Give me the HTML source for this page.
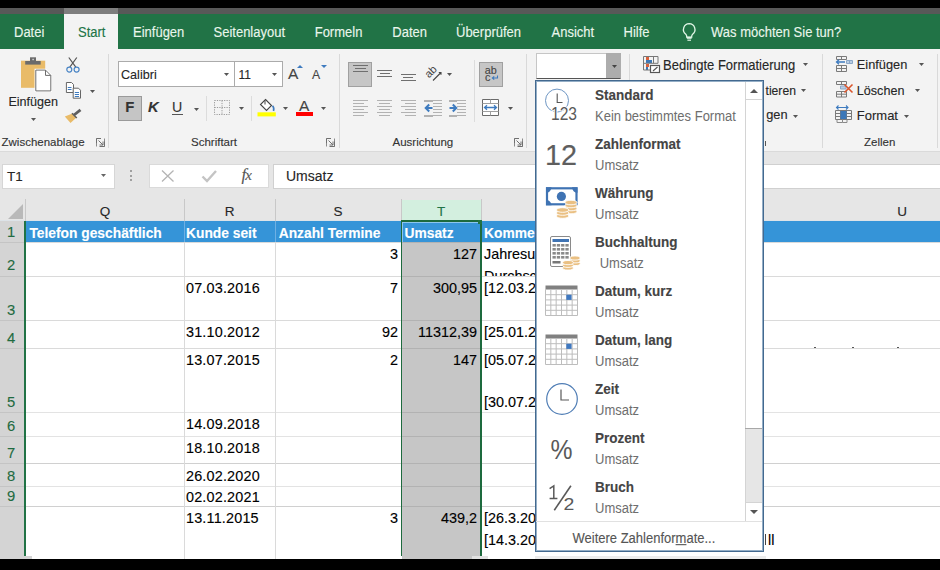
<!DOCTYPE html>
<html><head><meta charset="utf-8"><style>
html,body{margin:0;padding:0;}
body{width:940px;height:570px;position:relative;overflow:hidden;background:#fff;font-family:"Liberation Sans",sans-serif;}
div,span,svg{position:absolute;}
.t{white-space:nowrap;-webkit-text-stroke:0.12px currentColor;}
</style></head><body>
<div style="left:0px;top:0px;width:940px;height:8px;background:#000;"></div>
<div style="left:0px;top:8px;width:940px;height:6px;background:#585858;"></div>
<div style="left:64px;top:8px;width:54px;height:6px;background:#7e7e7e;"></div>
<div style="left:0px;top:14px;width:940px;height:35px;background:#217346;"></div>
<div style="left:64px;top:14px;width:54px;height:35px;background:#f3f3f3;"></div>
<span class="t" style="top:26.00px;font-size:13px;line-height:13px;color:#eaf6ec;font-weight:normal;transform:scaleY(1.12);transform-origin:0 11.00px;left:14px;">Datei</span>
<span class="t" style="top:26.00px;font-size:13px;line-height:13px;color:#eaf6ec;font-weight:normal;transform:scaleY(1.12);transform-origin:0 11.00px;left:133px;">Einfügen</span>
<span class="t" style="top:26.00px;font-size:13px;line-height:13px;color:#eaf6ec;font-weight:normal;transform:scaleY(1.12);transform-origin:0 11.00px;left:213.5px;">Seitenlayout</span>
<span class="t" style="top:26.00px;font-size:13px;line-height:13px;color:#eaf6ec;font-weight:normal;transform:scaleY(1.12);transform-origin:0 11.00px;left:314.7px;">Formeln</span>
<span class="t" style="top:26.00px;font-size:13px;line-height:13px;color:#eaf6ec;font-weight:normal;transform:scaleY(1.12);transform-origin:0 11.00px;left:392.3px;">Daten</span>
<span class="t" style="top:26.00px;font-size:13px;line-height:13px;color:#eaf6ec;font-weight:normal;transform:scaleY(1.12);transform-origin:0 11.00px;left:456px;">Überprüfen</span>
<span class="t" style="top:26.00px;font-size:13px;line-height:13px;color:#eaf6ec;font-weight:normal;transform:scaleY(1.12);transform-origin:0 11.00px;left:551.5px;">Ansicht</span>
<span class="t" style="top:26.00px;font-size:13px;line-height:13px;color:#eaf6ec;font-weight:normal;transform:scaleY(1.12);transform-origin:0 11.00px;left:623.5px;">Hilfe</span>
<span class="t" style="top:26.00px;font-size:13px;line-height:13px;color:#eaf6ec;font-weight:normal;transform:scaleY(1.12);transform-origin:0 11.00px;left:711px;">Was möchten Sie tun?</span>
<span class="t" style="top:26.00px;font-size:13px;line-height:13px;color:#217346;font-weight:normal;transform:scaleY(1.12);transform-origin:0 11.00px;left:78px;">Start</span>
<svg style="left:680px;top:20px;" width="20" height="22" viewBox="0 0 20 22"><path d="M9.2 3.6a5.9 5.9 0 0 0-3.4 10.6c.8.7.9 1.3.9 2.1v.9h5v-.9c0-.8.1-1.4.9-2.1A5.9 5.9 0 0 0 9.2 3.6z" fill="none" stroke="#e0f6e6" stroke-width="1.3"/><path d="M6.8 17.8h4.8" stroke="#e0f6e6" stroke-width="2"/><path d="M7.4 20.2h3.6" stroke="#e0f6e6" stroke-width="1.2"/></svg>
<div style="left:0px;top:49px;width:940px;height:103px;background:#f3f3f3;"></div>
<div style="left:0px;top:151px;width:940px;height:1px;background:#dadada;"></div>
<div style="left:108px;top:54px;width:1px;height:94px;background:#d9d9d9;"></div>
<div style="left:339px;top:54px;width:1px;height:94px;background:#d9d9d9;"></div>
<div style="left:526px;top:54px;width:1px;height:94px;background:#d9d9d9;"></div>
<div style="left:629px;top:54px;width:1px;height:94px;background:#d9d9d9;"></div>
<div style="left:822px;top:54px;width:1px;height:94px;background:#d9d9d9;"></div>
<div style="left:937px;top:54px;width:1px;height:94px;background:#d9d9d9;"></div>
<span class="t" style="top:137.47px;font-size:11.5px;line-height:11.5px;color:#333333;font-weight:normal;left:1.5px;">Zwischenablage</span>
<span class="t" style="top:137.47px;font-size:11.5px;line-height:11.5px;color:#333333;font-weight:normal;left:191px;">Schriftart</span>
<span class="t" style="top:137.47px;font-size:11.5px;line-height:11.5px;color:#333333;font-weight:normal;left:392.5px;">Ausrichtung</span>
<span class="t" style="top:137.47px;font-size:11.5px;line-height:11.5px;color:#333333;font-weight:normal;left:864px;">Zellen</span>
<div style="left:0px;top:152px;width:940px;height:47px;background:#e6e6e6;"></div>
<div style="left:2px;top:163.5px;width:112.5px;height:25.0px;background:#ffffff;border:1px solid #d6d6d6;box-sizing:border-box"></div>
<div style="left:149px;top:164px;width:120px;height:24px;background:#ffffff;"></div>
<div style="left:273px;top:163.5px;width:669px;height:25.0px;background:#ffffff;border:1px solid #d0d0d0;box-sizing:border-box"></div>
<span class="t" style="top:169.57px;font-size:13.5px;line-height:13.5px;color:#262626;font-weight:normal;left:7px;">T1</span>
<div style="left:149px;top:164px;width:120px;height:24px;background:#ffffff;border:1px solid #dadada;box-sizing:border-box"></div>
<svg style="left:101px;top:174.2px;" width="5" height="3" viewBox="0 0 5 3"><path d="M0 0H5L2.5 3Z" fill="#666"/></svg>
<div style="left:129.5px;top:169.5px;width:2.0px;height:2.0px;background:#a0a0a0;"></div>
<div style="left:129.5px;top:174.5px;width:2.0px;height:2.0px;background:#a0a0a0;"></div>
<div style="left:129.5px;top:179.3px;width:2.0px;height:2.0px;background:#a0a0a0;"></div>
<svg style="left:160px;top:168px;" width="17" height="16" viewBox="0 0 17 16"><path d="M2 2.5L13.5 13.5M13.5 2.5L2 13.5" stroke="#b4b4b4" stroke-width="1.3"/></svg>
<svg style="left:200px;top:168px;" width="19" height="16" viewBox="0 0 19 16"><path d="M2.5 8.5L7 13L16 3" fill="none" stroke="#c4c4c4" stroke-width="2.4"/></svg>
<span class="t" style="top:166.11px;font-size:17px;line-height:17px;color:#555;font-weight:normal;font-family:'Liberation Serif';left:241.5px;font-style:italic;"><i>f</i><span style="position:relative;font-style:italic;font-size:15px;left:-1px">x</span></span>
<span class="t" style="top:169.15px;font-size:14px;line-height:14px;color:#262626;font-weight:normal;left:286px;">Umsatz</span>
<div style="left:0px;top:199px;width:940px;height:360px;background:#ffffff;"></div>
<div style="left:0px;top:199px;width:940px;height:22px;background:#e6e6e6;"></div>
<div style="left:0px;top:221px;width:25px;height:338px;background:#d4d4d4;"></div>
<div style="left:401px;top:242px;width:80px;height:317px;background:#c6c6c6;"></div>
<div style="left:25px;top:221px;width:915px;height:21px;background:#3594d8;"></div>
<div style="left:25px;top:242px;width:915px;height:1px;background:#dadada;"></div>
<div style="left:401px;top:242px;width:80px;height:1px;background:#b2b2b2;"></div>
<div style="left:0px;top:242px;width:25px;height:1px;background:#c4c4c4;"></div>
<div style="left:25px;top:276px;width:915px;height:1px;background:#dadada;"></div>
<div style="left:401px;top:276px;width:80px;height:1px;background:#b2b2b2;"></div>
<div style="left:0px;top:276px;width:25px;height:1px;background:#c4c4c4;"></div>
<div style="left:25px;top:320px;width:915px;height:1px;background:#dadada;"></div>
<div style="left:401px;top:320px;width:80px;height:1px;background:#b2b2b2;"></div>
<div style="left:0px;top:320px;width:25px;height:1px;background:#c4c4c4;"></div>
<div style="left:25px;top:348px;width:915px;height:1px;background:#dadada;"></div>
<div style="left:401px;top:348px;width:80px;height:1px;background:#b2b2b2;"></div>
<div style="left:0px;top:348px;width:25px;height:1px;background:#c4c4c4;"></div>
<div style="left:25px;top:412px;width:915px;height:1px;background:#e3e3e3;"></div>
<div style="left:401px;top:412px;width:80px;height:1px;background:#b2b2b2;"></div>
<div style="left:0px;top:412px;width:25px;height:1px;background:#c4c4c4;"></div>
<div style="left:25px;top:436px;width:915px;height:1px;background:#e3e3e3;"></div>
<div style="left:401px;top:436px;width:80px;height:1px;background:#b2b2b2;"></div>
<div style="left:0px;top:436px;width:25px;height:1px;background:#c4c4c4;"></div>
<div style="left:25px;top:463px;width:915px;height:1px;background:#d0d0d0;"></div>
<div style="left:401px;top:463px;width:80px;height:1px;background:#b2b2b2;"></div>
<div style="left:0px;top:463px;width:25px;height:1px;background:#c4c4c4;"></div>
<div style="left:25px;top:486px;width:915px;height:1px;background:#e3e3e3;"></div>
<div style="left:401px;top:486px;width:80px;height:1px;background:#b2b2b2;"></div>
<div style="left:0px;top:486px;width:25px;height:1px;background:#c4c4c4;"></div>
<div style="left:25px;top:506px;width:915px;height:1px;background:#d0d0d0;"></div>
<div style="left:401px;top:506px;width:80px;height:1px;background:#b2b2b2;"></div>
<div style="left:0px;top:506px;width:25px;height:1px;background:#c4c4c4;"></div>
<div style="left:184px;top:242px;width:1px;height:317px;background:#dadada;"></div>
<div style="left:184px;top:221px;width:1px;height:21px;background:#6fb0e3;"></div>
<div style="left:275px;top:242px;width:1px;height:317px;background:#dadada;"></div>
<div style="left:275px;top:221px;width:1px;height:21px;background:#6fb0e3;"></div>
<div style="left:481px;top:221px;width:1px;height:21px;background:#6fb0e3;"></div>
<div style="left:0px;top:220px;width:940px;height:1px;background:#dde3e8;"></div>
<div style="left:184px;top:199px;width:1px;height:22px;background:#c8c8c8;"></div>
<div style="left:275px;top:199px;width:1px;height:22px;background:#c8c8c8;"></div>
<div style="left:401px;top:199px;width:1px;height:22px;background:#c8c8c8;"></div>
<div style="left:481px;top:199px;width:1px;height:22px;background:#c8c8c8;"></div>
<div style="left:402px;top:200px;width:79px;height:20px;background:#d3efdf;"></div>
<div style="left:400.5px;top:220px;width:1.5px;height:336px;background:#1d6a3e;"></div>
<div style="left:480px;top:220px;width:1.5px;height:336px;background:#1d6a3e;"></div>
<div style="left:400.5px;top:220px;width:81.0px;height:1.5px;background:#1d6a3e;"></div>
<div style="left:402px;top:221.5px;width:78px;height:1.0px;background:#8cc6ee;"></div>
<div style="left:402px;top:221.5px;width:1px;height:20.5px;background:#8cc6ee;"></div>
<div style="left:478px;top:219.5px;width:4px;height:4.0px;background:#217346;"></div>
<div style="left:24px;top:221px;width:2px;height:335px;background:#217346;"></div>
<div style="left:0px;top:556px;width:32px;height:3px;background:#d4d4d4;"></div>
<div style="left:400px;top:556px;width:82px;height:3px;background:#ffffff;"></div>
<div style="left:402px;top:556px;width:70px;height:3px;background:#c6c6c6;"></div>
<div style="left:472px;top:556px;width:16px;height:3px;background:#e2e2e2;"></div>
<div style="left:535px;top:556px;width:231px;height:3px;background:#ececec;"></div>
<svg style="left:8px;top:204px;" width="15" height="15" viewBox="0 0 15 15"><path d="M15 0V15H0Z" fill="#b9b9b9"/></svg>
<div style="left:25px;top:199px;width:1px;height:22px;background:#c8c8c8;"></div>
<span class="t" style="top:204.57px;font-size:13.5px;line-height:13.5px;color:#262626;font-weight:normal;left:-95px;width:400px;text-align:center;">Q</span>
<span class="t" style="top:204.57px;font-size:13.5px;line-height:13.5px;color:#262626;font-weight:normal;left:29.5px;width:400px;text-align:center;">R</span>
<span class="t" style="top:204.57px;font-size:13.5px;line-height:13.5px;color:#262626;font-weight:normal;left:138px;width:400px;text-align:center;">S</span>
<span class="t" style="top:204.57px;font-size:13.5px;line-height:13.5px;color:#217346;font-weight:normal;left:241px;width:400px;text-align:center;">T</span>
<span class="t" style="top:204.57px;font-size:13.5px;line-height:13.5px;color:#262626;font-weight:normal;left:702px;width:400px;text-align:center;">U</span>
<span class="t" style="top:224.87px;font-size:14.8px;line-height:14.8px;color:#1f6b41;font-weight:normal;left:-189px;width:400px;text-align:center;">1</span>
<span class="t" style="top:258.47px;font-size:14.8px;line-height:14.8px;color:#1f6b41;font-weight:normal;left:-189px;width:400px;text-align:center;">2</span>
<span class="t" style="top:302.77px;font-size:14.8px;line-height:14.8px;color:#1f6b41;font-weight:normal;left:-189px;width:400px;text-align:center;">3</span>
<span class="t" style="top:330.77px;font-size:14.8px;line-height:14.8px;color:#1f6b41;font-weight:normal;left:-189px;width:400px;text-align:center;">4</span>
<span class="t" style="top:394.77px;font-size:14.8px;line-height:14.8px;color:#1f6b41;font-weight:normal;left:-189px;width:400px;text-align:center;">5</span>
<span class="t" style="top:418.77px;font-size:14.8px;line-height:14.8px;color:#1f6b41;font-weight:normal;left:-189px;width:400px;text-align:center;">6</span>
<span class="t" style="top:445.77px;font-size:14.8px;line-height:14.8px;color:#1f6b41;font-weight:normal;left:-189px;width:400px;text-align:center;">7</span>
<span class="t" style="top:468.77px;font-size:14.8px;line-height:14.8px;color:#1f6b41;font-weight:normal;left:-189px;width:400px;text-align:center;">8</span>
<span class="t" style="top:488.77px;font-size:14.8px;line-height:14.8px;color:#1f6b41;font-weight:normal;left:-189px;width:400px;text-align:center;">9</span>
<span class="t" style="top:226.72px;font-size:13.8px;line-height:13.8px;color:#ffffff;font-weight:bold;left:29.4px;">Telefon geschäftlich</span>
<span class="t" style="top:226.72px;font-size:13.8px;line-height:13.8px;color:#ffffff;font-weight:bold;left:186px;">Kunde seit</span>
<span class="t" style="top:226.72px;font-size:13.8px;line-height:13.8px;color:#ffffff;font-weight:bold;left:278.7px;">Anzahl Termine</span>
<span class="t" style="top:226.72px;font-size:13.8px;line-height:13.8px;color:#ffffff;font-weight:bold;left:404.5px;">Umsatz</span>
<span class="t" style="top:226.72px;font-size:13.8px;line-height:13.8px;color:#ffffff;font-weight:bold;left:484px;">Kommentar</span>
<span class="t" style="top:280.81px;font-size:14.4px;line-height:14.4px;color:#000000;font-weight:normal;left:186px;letter-spacing:0.18px;">07.03.2016</span>
<span class="t" style="top:325.31px;font-size:14.4px;line-height:14.4px;color:#000000;font-weight:normal;left:186px;letter-spacing:0.18px;">31.10.2012</span>
<span class="t" style="top:352.81px;font-size:14.4px;line-height:14.4px;color:#000000;font-weight:normal;left:186px;letter-spacing:0.18px;">13.07.2015</span>
<span class="t" style="top:416.81px;font-size:14.4px;line-height:14.4px;color:#000000;font-weight:normal;left:186px;letter-spacing:0.18px;">14.09.2018</span>
<span class="t" style="top:440.81px;font-size:14.4px;line-height:14.4px;color:#000000;font-weight:normal;left:186px;letter-spacing:0.18px;">18.10.2018</span>
<span class="t" style="top:468.81px;font-size:14.4px;line-height:14.4px;color:#000000;font-weight:normal;left:186px;letter-spacing:0.18px;">26.02.2020</span>
<span class="t" style="top:489.81px;font-size:14.4px;line-height:14.4px;color:#000000;font-weight:normal;left:186px;letter-spacing:0.18px;">02.02.2021</span>
<span class="t" style="top:510.81px;font-size:14.4px;line-height:14.4px;color:#000000;font-weight:normal;left:186px;letter-spacing:0.18px;">13.11.2015</span>
<span class="t" style="top:247.31px;font-size:14.4px;line-height:14.4px;color:#000000;font-weight:normal;right:542px;text-align:right;">3</span>
<span class="t" style="top:280.81px;font-size:14.4px;line-height:14.4px;color:#000000;font-weight:normal;right:542px;text-align:right;">7</span>
<span class="t" style="top:325.31px;font-size:14.4px;line-height:14.4px;color:#000000;font-weight:normal;right:542px;text-align:right;">92</span>
<span class="t" style="top:352.81px;font-size:14.4px;line-height:14.4px;color:#000000;font-weight:normal;right:542px;text-align:right;">2</span>
<span class="t" style="top:510.81px;font-size:14.4px;line-height:14.4px;color:#000000;font-weight:normal;right:542px;text-align:right;">3</span>
<span class="t" style="top:247.31px;font-size:14.4px;line-height:14.4px;color:#000000;font-weight:normal;right:463px;text-align:right;">127</span>
<span class="t" style="top:280.81px;font-size:14.4px;line-height:14.4px;color:#000000;font-weight:normal;right:463px;text-align:right;">300,95</span>
<span class="t" style="top:325.31px;font-size:14.4px;line-height:14.4px;color:#000000;font-weight:normal;right:463px;text-align:right;">11312,39</span>
<span class="t" style="top:352.81px;font-size:14.4px;line-height:14.4px;color:#000000;font-weight:normal;right:463px;text-align:right;">147</span>
<span class="t" style="top:510.81px;font-size:14.4px;line-height:14.4px;color:#000000;font-weight:normal;right:463px;text-align:right;">439,2</span>
<span class="t" style="top:247.31px;font-size:14.4px;line-height:14.4px;color:#000000;font-weight:normal;left:484px;">Jahresumsatz</span>
<span class="t" style="top:280.81px;font-size:14.4px;line-height:14.4px;color:#000000;font-weight:normal;left:484px;">[12.03.2016]</span>
<span class="t" style="top:325.31px;font-size:14.4px;line-height:14.4px;color:#000000;font-weight:normal;left:484px;">[25.01.2013]</span>
<span class="t" style="top:352.81px;font-size:14.4px;line-height:14.4px;color:#000000;font-weight:normal;left:484px;">[05.07.2015]</span>
<span class="t" style="top:395.11px;font-size:14.4px;line-height:14.4px;color:#000000;font-weight:normal;left:484px;">[30.07.2015]</span>
<span class="t" style="top:510.81px;font-size:14.4px;line-height:14.4px;color:#000000;font-weight:normal;left:484px;">[26.3.2015]</span>
<span class="t" style="top:532.61px;font-size:14.4px;line-height:14.4px;color:#000000;font-weight:normal;left:484px;">[14.3.2016] Ball</span>
<div style="left:482px;top:242px;width:60px;height:34px;overflow:hidden">
<span class="t" style="top:26.81px;font-size:14.4px;line-height:14.4px;color:#000000;font-weight:normal;left:2px;">Durchschnitt</span>
</div>
<div style="left:814px;top:346.5px;width:2px;height:1.5px;background:#555;"></div>
<div style="left:852px;top:346.5px;width:2px;height:1.5px;background:#555;"></div>
<div style="left:897px;top:346.5px;width:2px;height:1.5px;background:#555;"></div>
<div style="left:0px;top:559px;width:940px;height:11px;background:#000;"></div>
<span class="t" style="top:58.60px;font-size:13px;line-height:13px;color:#262626;font-weight:normal;transform:scaleY(1.1);transform-origin:0 11.00px;left:663px;">Bedingte Formatierung</span>
<div style="left:0px;top:0px;width:0px;height:0px;background:#000;"></div>
<span class="t" style="top:84.87px;font-size:12.2px;line-height:12.2px;color:#262626;font-weight:normal;left:765.5px;">tieren</span>
<span class="t" style="top:109.36px;font-size:12.8px;line-height:12.8px;color:#262626;font-weight:normal;left:766.2px;">gen</span>
<div style="left:765px;top:141px;width:1px;height:5px;background:#555;"></div>
<span class="t" style="top:58.96px;font-size:12.8px;line-height:12.8px;color:#262626;font-weight:normal;left:856.8px;">Einfügen</span>
<span class="t" style="top:84.53px;font-size:12.6px;line-height:12.6px;color:#262626;font-weight:normal;left:856.8px;">Löschen</span>
<span class="t" style="top:109.20px;font-size:13px;line-height:13px;color:#262626;font-weight:normal;left:856.8px;">Format</span>
<svg style="left:800.6px;top:88.6px;" width="5" height="3" viewBox="0 0 5 3"><path d="M0 0H5L2.5 3Z" fill="#555"/></svg>
<svg style="left:793px;top:115px;" width="5" height="3" viewBox="0 0 5 3"><path d="M0 0H5L2.5 3Z" fill="#555"/></svg>
<svg style="left:803px;top:63px;" width="5" height="3" viewBox="0 0 5 3"><path d="M0 0H5L2.5 3Z" fill="#555"/></svg>
<svg style="left:918.5px;top:63.3px;" width="5" height="3" viewBox="0 0 5 3"><path d="M0 0H5L2.5 3Z" fill="#555"/></svg>
<svg style="left:915px;top:89px;" width="5" height="3" viewBox="0 0 5 3"><path d="M0 0H5L2.5 3Z" fill="#555"/></svg>
<svg style="left:903.8px;top:115px;" width="5" height="3" viewBox="0 0 5 3"><path d="M0 0H5L2.5 3Z" fill="#555"/></svg>
<div style="left:536px;top:53px;width:85px;height:26px;background:#ffffff;border:1px solid #c6c6c6;border-bottom:1px solid #555;box-sizing:border-box"></div>
<div style="left:606px;top:53px;width:15px;height:25px;background:#adadad;"></div>
<svg style="left:611.5px;top:65px;" width="5" height="3" viewBox="0 0 5 3"><path d="M0 0H5L2.5 3Z" fill="#444"/></svg>
<svg style="left:20px;top:56px;" width="32" height="36" viewBox="0 0 32 36"><rect x="1" y="4.7" width="24.2" height="27.1" fill="#e9bb68"/><rect x="5.2" y="5" width="15.5" height="3.6" fill="#6b6b6b"/><rect x="10" y="1.3" width="6" height="4.2" fill="#6b6b6b"/><rect x="12.4" y="2.8" width="1.4" height="1.4" fill="#ddd"/><path d="M15.8 14.1H25.5L30.8 19.4V34.9H15.8Z" fill="#fff" stroke="#fff" stroke-width="2.5"/><path d="M15.8 14.1H25.5L30.8 19.4V34.9H15.8Z" fill="#fff" stroke="#6d6d6d" stroke-width="1"/><path d="M25.5 14.1V19.4H30.8" fill="none" stroke="#6d6d6d" stroke-width="1"/></svg>
<span class="t" style="top:96.13px;font-size:12.6px;line-height:12.6px;color:#262626;font-weight:normal;left:8.4px;">Einfügen</span>
<svg style="left:31px;top:118px;" width="5" height="3" viewBox="0 0 5 3"><path d="M0 0H5L2.5 3Z" fill="#555"/></svg>
<svg style="left:64px;top:55px;" width="18" height="19" viewBox="0 0 18 19"><path d="M4.8 2.5L11.8 12.2M12.8 2.5L5.8 12.2" stroke="#555" stroke-width="1.2"/><circle cx="5.3" cy="14.6" r="2.5" fill="#f3f3f3" stroke="#4a85c5" stroke-width="1.2"/><circle cx="12.6" cy="14.6" r="2.5" fill="#f3f3f3" stroke="#4a85c5" stroke-width="1.2"/></svg>
<svg style="left:64px;top:81px;" width="20" height="20" viewBox="0 0 20 20"><path d="M2.4 1.5H7.5L9.5 3.5V11.5H2.4Z" fill="#fff" stroke="#666" stroke-width="1"/><path d="M3.8 6.5H7.5M3.8 8.5H7.5" stroke="#3e7bbf" stroke-width="1"/><path d="M9.2 7.2H14.5L16.5 9.2V17.2H9.2Z" fill="#fff" stroke="#666" stroke-width="1"/><path d="M10.8 11.5H15M10.8 13.5H15M10.8 15.5H15" stroke="#3e7bbf" stroke-width="1"/></svg>
<svg style="left:90px;top:90.2px;" width="5" height="3" viewBox="0 0 5 3"><path d="M0 0H5L2.5 3Z" fill="#555"/></svg>
<svg style="left:63px;top:107px;" width="20" height="18" viewBox="0 0 20 18"><path d="M11 8L17.5 2.8" stroke="#5f5f5f" stroke-width="2.8"/><path d="M9.5 6.5L13.5 10.5L7.5 16L1.8 9.5Z" fill="#e9bb68"/><path d="M9 6.3L13.8 11" stroke="#5f5f5f" stroke-width="1.5"/></svg>
<svg style="left:96px;top:138px;" width="9" height="9" viewBox="0 0 9 9"><path d="M0.5 0.5H8.5V8.5H0.5Z" fill="none" stroke="#8a8a8a" stroke-width="1" stroke-dasharray="4 4" stroke-dashoffset="0"/><path d="M0.5 0.5H5M0.5 0.5V5M2.5 2.5L7 7M7 3.5V7H3.5" fill="none" stroke="#707070" stroke-width="1"/><path d="M8.5 3.5V8.5H3.5" fill="none" stroke="#707070" stroke-width="1"/></svg>
<svg style="left:326px;top:138px;" width="9" height="9" viewBox="0 0 9 9"><path d="M0.5 0.5H8.5V8.5H0.5Z" fill="none" stroke="#8a8a8a" stroke-width="1" stroke-dasharray="4 4" stroke-dashoffset="0"/><path d="M0.5 0.5H5M0.5 0.5V5M2.5 2.5L7 7M7 3.5V7H3.5" fill="none" stroke="#707070" stroke-width="1"/><path d="M8.5 3.5V8.5H3.5" fill="none" stroke="#707070" stroke-width="1"/></svg>
<svg style="left:514px;top:138px;" width="9" height="9" viewBox="0 0 9 9"><path d="M0.5 0.5H8.5V8.5H0.5Z" fill="none" stroke="#8a8a8a" stroke-width="1" stroke-dasharray="4 4" stroke-dashoffset="0"/><path d="M0.5 0.5H5M0.5 0.5V5M2.5 2.5L7 7M7 3.5V7H3.5" fill="none" stroke="#707070" stroke-width="1"/><path d="M8.5 3.5V8.5H3.5" fill="none" stroke="#707070" stroke-width="1"/></svg>
<div style="left:118px;top:61px;width:117px;height:26px;background:#fff;border:1px solid #ababab;box-sizing:border-box"></div>
<div style="left:234px;top:61px;width:49px;height:26px;background:#fff;border:1px solid #ababab;box-sizing:border-box"></div>
<span class="t" style="top:68.83px;font-size:12.6px;line-height:12.6px;color:#262626;font-weight:normal;left:121px;">Calibri</span>
<span class="t" style="top:69.44px;font-size:12px;line-height:12px;color:#262626;font-weight:normal;left:238.5px;">11</span>
<svg style="left:223.6px;top:73px;" width="5" height="3" viewBox="0 0 5 3"><path d="M0 0H5L2.5 3Z" fill="#555"/></svg>
<svg style="left:271.7px;top:73px;" width="5" height="3" viewBox="0 0 5 3"><path d="M0 0H5L2.5 3Z" fill="#555"/></svg>
<span class="t" style="top:66.48px;font-size:15.5px;line-height:15.5px;color:#444;font-weight:normal;left:288px;">A</span>
<svg style="left:297px;top:65px;" width="6" height="4" viewBox="0 0 6 4"><path d="M0 3H6L3 0Z" fill="#3e7bbf"/></svg>
<span class="t" style="top:69.27px;font-size:12.2px;line-height:12.2px;color:#444;font-weight:normal;left:312px;">A</span>
<svg style="left:321px;top:65px;" width="6" height="4" viewBox="0 0 6 4"><path d="M0 0H6L3 3Z" fill="#3e7bbf"/></svg>
<div style="left:118px;top:96px;width:24px;height:25px;background:#c5c5c5;border:1px solid #9a9a9a;box-sizing:border-box"></div>
<span class="t" style="top:99.87px;font-size:14.8px;line-height:14.8px;color:#333;font-weight:bold;left:125.3px;">F</span>
<span class="t" style="top:99.87px;font-size:14.8px;line-height:14.8px;color:#333;font-weight:bold;left:148px;font-style:italic;">K</span>
<span class="t" style="top:99.98px;font-size:14.2px;line-height:14.2px;color:#333;font-weight:normal;left:172px;">U</span>
<div style="left:172px;top:114px;width:10.5px;height:1px;background:#555;"></div>
<svg style="left:193.6px;top:108px;" width="5" height="3" viewBox="0 0 5 3"><path d="M0 0H5L2.5 3Z" fill="#555"/></svg>
<div style="left:206px;top:96px;width:1px;height:25px;background:#dcdcdc;"></div>
<svg style="left:213px;top:99px;" width="18" height="16" viewBox="0 0 18 16"><path d="M1.5 1.5H16.5V15.5H1.5ZM9 1.5V15.5M1.5 8.5H16.5" fill="none" stroke="#9a9a9a" stroke-width="1" stroke-dasharray="1.2 1.2"/></svg>
<svg style="left:238.5px;top:107px;" width="5" height="3" viewBox="0 0 5 3"><path d="M0 0H5L2.5 3Z" fill="#555"/></svg>
<div style="left:251px;top:96px;width:1px;height:25px;background:#dcdcdc;"></div>
<svg style="left:257px;top:97px;" width="20" height="20" viewBox="0 0 20 20"><path d="M8.5 2.5L14.5 8.5L9.5 13.5L3.5 7.5Z" fill="#fff" stroke="#444" stroke-width="1.1"/><path d="M8 3.5V7.5" stroke="#444" stroke-width="1"/><path d="M15.5 8.8Q17.5 11 16.5 14" fill="none" stroke="#3e7bbf" stroke-width="1.6"/><rect x="0.5" y="15.3" width="18.3" height="4.1" fill="#ffff00"/></svg>
<svg style="left:282.7px;top:107px;" width="5" height="3" viewBox="0 0 5 3"><path d="M0 0H5L2.5 3Z" fill="#555"/></svg>
<span class="t" style="top:98.48px;font-size:15.5px;line-height:15.5px;color:#444;font-weight:normal;left:299px;">A</span>
<div style="left:296px;top:112.3px;width:17.399999999999977px;height:4.1000000000000085px;background:#ff0000;"></div>
<svg style="left:320.9px;top:107px;" width="5" height="3" viewBox="0 0 5 3"><path d="M0 0H5L2.5 3Z" fill="#555"/></svg>
<div style="left:348px;top:62px;width:24px;height:25px;background:#c6c6c6;border:1px solid #a0a0a0;box-sizing:border-box"></div>
<div style="left:353px;top:65px;width:15px;height:1px;background:#6f6f6f;"></div>
<div style="left:355px;top:68px;width:11px;height:1px;background:#6f6f6f;"></div>
<div style="left:353px;top:71px;width:15px;height:1px;background:#6f6f6f;"></div>
<div style="left:377px;top:70px;width:15px;height:1px;background:#6f6f6f;"></div>
<div style="left:379.5px;top:73px;width:10.0px;height:1px;background:#6f6f6f;"></div>
<div style="left:377px;top:76px;width:15px;height:1px;background:#6f6f6f;"></div>
<div style="left:401px;top:74.0px;width:14.5px;height:1.0px;background:#6f6f6f;"></div>
<div style="left:403px;top:77.2px;width:10px;height:1.0px;background:#6f6f6f;"></div>
<div style="left:401px;top:80.4px;width:14.5px;height:1.0px;background:#6f6f6f;"></div>
<svg style="left:425px;top:65px;" width="20" height="18" viewBox="0 0 20 18"><text x="0" y="0" transform="translate(4,13.5) rotate(-45)" font-family="Liberation Sans" font-size="11" fill="#444">ab</text><path d="M8 15.5L16 7.5M13.8 7.5H16V9.7" fill="none" stroke="#444" stroke-width="1.1"/></svg>
<svg style="left:447.4px;top:73.4px;" width="5" height="3" viewBox="0 0 5 3"><path d="M0 0H5L2.5 3Z" fill="#555"/></svg>
<div style="left:474px;top:60px;width:1px;height:62px;background:#dcdcdc;"></div>
<div style="left:479px;top:62px;width:24px;height:25px;background:#c6c6c6;border:1px solid #a0a0a0;box-sizing:border-box"></div>
<span class="t" style="top:64.86px;font-size:10.8px;line-height:10.8px;color:#444;font-weight:normal;left:484.8px;">ab</span>
<span class="t" style="top:71.86px;font-size:10.8px;line-height:10.8px;color:#444;font-weight:normal;left:485px;">c</span>
<svg style="left:491px;top:75px;" width="8" height="6" viewBox="0 0 8 6"><path d="M6.5 0.5V3H1.5M3.2 1.3L1.3 3L3.2 4.7" fill="none" stroke="#3e7bbf" stroke-width="1.1"/></svg>
<div style="left:353px;top:100px;width:15px;height:1.2000000000000028px;background:#b2b2b2;"></div>
<div style="left:353px;top:103px;width:11px;height:1.2000000000000028px;background:#b2b2b2;"></div>
<div style="left:353px;top:106px;width:15px;height:1.2000000000000028px;background:#b2b2b2;"></div>
<div style="left:353px;top:109px;width:11px;height:1.2000000000000028px;background:#b2b2b2;"></div>
<div style="left:353px;top:112px;width:15px;height:1.2000000000000028px;background:#b2b2b2;"></div>
<div style="left:353px;top:115px;width:11px;height:1.2000000000000028px;background:#b2b2b2;"></div>
<div style="left:377px;top:100px;width:15px;height:1.2000000000000028px;background:#b2b2b2;"></div>
<div style="left:379px;top:103px;width:11px;height:1.2000000000000028px;background:#b2b2b2;"></div>
<div style="left:377px;top:106px;width:15px;height:1.2000000000000028px;background:#b2b2b2;"></div>
<div style="left:379px;top:109px;width:11px;height:1.2000000000000028px;background:#b2b2b2;"></div>
<div style="left:377px;top:112px;width:15px;height:1.2000000000000028px;background:#b2b2b2;"></div>
<div style="left:379px;top:115px;width:11px;height:1.2000000000000028px;background:#b2b2b2;"></div>
<div style="left:401px;top:100px;width:15px;height:1.2000000000000028px;background:#b2b2b2;"></div>
<div style="left:405px;top:103px;width:11px;height:1.2000000000000028px;background:#b2b2b2;"></div>
<div style="left:401px;top:106px;width:15px;height:1.2000000000000028px;background:#b2b2b2;"></div>
<div style="left:405px;top:109px;width:11px;height:1.2000000000000028px;background:#b2b2b2;"></div>
<div style="left:401px;top:112px;width:15px;height:1.2000000000000028px;background:#b2b2b2;"></div>
<div style="left:405px;top:115px;width:11px;height:1.2000000000000028px;background:#b2b2b2;"></div>
<div style="left:433px;top:100px;width:9px;height:1.2000000000000028px;background:#b2b2b2;"></div>
<div style="left:433px;top:103px;width:9px;height:1.2000000000000028px;background:#b2b2b2;"></div>
<div style="left:433px;top:106px;width:9px;height:1.2000000000000028px;background:#b2b2b2;"></div>
<div style="left:433px;top:109px;width:9px;height:1.2000000000000028px;background:#b2b2b2;"></div>
<div style="left:433px;top:112px;width:9px;height:1.2000000000000028px;background:#b2b2b2;"></div>
<div style="left:433px;top:115px;width:9px;height:1.2000000000000028px;background:#b2b2b2;"></div>
<div style="left:457px;top:100px;width:9px;height:1.2000000000000028px;background:#b2b2b2;"></div>
<div style="left:457px;top:103px;width:9px;height:1.2000000000000028px;background:#b2b2b2;"></div>
<div style="left:457px;top:106px;width:9px;height:1.2000000000000028px;background:#b2b2b2;"></div>
<div style="left:457px;top:109px;width:9px;height:1.2000000000000028px;background:#b2b2b2;"></div>
<div style="left:457px;top:112px;width:9px;height:1.2000000000000028px;background:#b2b2b2;"></div>
<div style="left:457px;top:115px;width:9px;height:1.2000000000000028px;background:#b2b2b2;"></div>
<div style="left:424px;top:100px;width:9px;height:1.5999999999999943px;background:#b2b2b2;"></div>
<div style="left:424px;top:115px;width:9px;height:1.5999999999999943px;background:#b2b2b2;"></div>
<div style="left:449px;top:100px;width:8px;height:1.5999999999999943px;background:#b2b2b2;"></div>
<div style="left:449px;top:115px;width:8px;height:1.5999999999999943px;background:#b2b2b2;"></div>
<svg style="left:424px;top:102px;" width="10" height="12" viewBox="0 0 10 12"><path d="M8.5 6H2M5.2 2.5L1.7 6L5.2 9.5" fill="none" stroke="#3e7bbf" stroke-width="2"/></svg>
<svg style="left:448px;top:102px;" width="10" height="12" viewBox="0 0 10 12"><path d="M1.5 6H8M4.8 2.5L8.3 6L4.8 9.5" fill="none" stroke="#3e7bbf" stroke-width="2"/></svg>
<svg style="left:481px;top:98px;" width="20" height="20" viewBox="0 0 20 20"><path d="M1.5 1.5H17.5V17.5H1.5Z" fill="#fff" stroke="#6a6a6a" stroke-width="1"/><path d="M9.5 1.5V5.5M9.5 13.5V17.5M1.5 5.5H17.5M1.5 13.5H17.5" stroke="#a0a0a0" stroke-width="1"/><path d="M3.5 9.5H15.5M6 7.2L3.5 9.5L6 11.8M13 7.2L15.5 9.5L13 11.8" fill="none" stroke="#3e7bbf" stroke-width="1.3"/></svg>
<svg style="left:507.8px;top:107px;" width="5" height="3" viewBox="0 0 5 3"><path d="M0 0H5L2.5 3Z" fill="#555"/></svg>
<svg style="left:642px;top:55px;" width="19" height="19" viewBox="0 0 19 19"><rect x="4" y="2" width="3" height="3" fill="#d9603b"/><rect x="4" y="9" width="3" height="3" fill="#d9603b"/><rect x="4" y="5" width="6" height="3" fill="#3c78b8"/><rect x="4" y="12" width="2" height="3" fill="#3c78b8"/><path d="M1.5 1.5H16M1.5 8.3H16M1.5 15H8M1.5 1.5V15M11.5 1.5V8.3M16 1.5V8.3" fill="none" stroke="#777" stroke-width="1"/><rect x="8.5" y="10.5" width="9" height="7" fill="#fff" stroke="#555" stroke-width="1.2"/><path d="M11 16L15.5 12" stroke="#555" stroke-width="1.2"/></svg>
<svg style="left:834px;top:54px;" width="20" height="20" viewBox="0 0 20 20"><path d="M2.5 2.5H12.5V5.5H2.5ZM7.5 2.5V5.5M2.5 11.5H12.5V17.5H2.5ZM2.5 14.5H12.5M7.5 11.5V17.5" fill="none" stroke="#7a7a7a" stroke-width="1"/><path d="M12.5 6.5H18.5V9.5H12.5Z" fill="#b9cde3" stroke="#8aa6c6" stroke-width="1"/><path d="M15.5 6.5V9.5" stroke="#8aa6c6" stroke-width="1"/><path d="M11 8H2.5M5 5.8L2.5 8L5 10.2" fill="none" stroke="#3e7bbf" stroke-width="1.3"/></svg>
<svg style="left:834px;top:79px;" width="20" height="20" viewBox="0 0 20 20"><path d="M2.5 2.5H12.5V5.5H2.5ZM7.5 2.5V5.5M2.5 12.5H12.5V18H2.5ZM2.5 15.2H12.5M7.5 12.5V18" fill="none" stroke="#7a7a7a" stroke-width="1"/><path d="M6.5 7H12V10H6.5Z" fill="#b9cde3" stroke="#8aa6c6" stroke-width="1"/><path d="M10.5 5.5L18.5 13.5M18.5 5.5L10.5 13.5" stroke="#d9542b" stroke-width="1.6"/></svg>
<svg style="left:834px;top:104px;" width="20" height="21" viewBox="0 0 20 21"><path d="M2.5 3.5H14M4.5 1.5L2.5 3.5L4.5 5.5M12 1.5L14 3.5L12 5.5" fill="none" stroke="#3e7bbf" stroke-width="1.1"/><path d="M1.5 6.5H17.5V15.5H1.5ZM1.5 9.5H17.5M1.5 12.5H17.5M6.5 6.5V15.5M12.5 6.5V15.5" fill="none" stroke="#7a7a7a" stroke-width="1"/><rect x="6.5" y="7" width="6" height="8" fill="#3c78b8"/><path d="M3 15.5V18.5H8.5V15.5M8.5 18.5H13V15.5" fill="none" stroke="#8a8a8a" stroke-width="1"/></svg>
<div style="left:535px;top:80px;width:229px;height:472px;background:#ffffff;border:1px solid #43698f;box-shadow:inset 0 0 0 1px #94aec6;box-sizing:border-box"></div>
<div style="left:745px;top:82px;width:17px;height:439px;background:#ffffff;border-left:1px solid #d4d4d4;box-sizing:border-box"></div>
<div style="left:745px;top:99px;width:17px;height:1px;background:#d4d4d4;"></div>
<div style="left:745px;top:428px;width:17px;height:1px;background:#a8a8a8;"></div>
<div style="left:746px;top:429px;width:16px;height:73px;background:#e6e6e6;"></div>
<div style="left:745px;top:502px;width:17px;height:1px;background:#d4d4d4;"></div>
<svg style="left:750px;top:88.5px;" width="8" height="4" viewBox="0 0 8 4"><path d="M0 4H8L4 0Z" fill="#555"/></svg>
<svg style="left:750px;top:510px;" width="8" height="4" viewBox="0 0 8 4"><path d="M0 0H8L4 4Z" fill="#555"/></svg>
<div style="left:536px;top:521px;width:226px;height:1px;background:#e1e1e1;"></div>
<span class="t" style="top:88.57px;font-size:13.5px;line-height:13.5px;color:#444444;font-weight:bold;transform:scaleY(1.1);transform-origin:0 11.43px;left:595px;">Standard</span>
<span class="t" style="top:110.00px;font-size:13px;line-height:13px;color:#6e6e6e;font-weight:normal;transform:scaleY(1.1);transform-origin:0 11.00px;left:595px;-webkit-text-stroke:0;">Kein bestimmtes Format</span>
<span class="t" style="top:137.57px;font-size:13.5px;line-height:13.5px;color:#444444;font-weight:bold;transform:scaleY(1.1);transform-origin:0 11.43px;left:595px;">Zahlenformat</span>
<span class="t" style="top:159.00px;font-size:13px;line-height:13px;color:#6e6e6e;font-weight:normal;transform:scaleY(1.1);transform-origin:0 11.00px;left:595px;-webkit-text-stroke:0;">Umsatz</span>
<span class="t" style="top:186.57px;font-size:13.5px;line-height:13.5px;color:#444444;font-weight:bold;transform:scaleY(1.1);transform-origin:0 11.43px;left:595px;">Währung</span>
<span class="t" style="top:208.00px;font-size:13px;line-height:13px;color:#6e6e6e;font-weight:normal;transform:scaleY(1.1);transform-origin:0 11.00px;left:595px;-webkit-text-stroke:0;">Umsatz</span>
<span class="t" style="top:235.57px;font-size:13.5px;line-height:13.5px;color:#444444;font-weight:bold;transform:scaleY(1.1);transform-origin:0 11.43px;left:595px;">Buchhaltung</span>
<span class="t" style="top:257.00px;font-size:13px;line-height:13px;color:#6e6e6e;font-weight:normal;transform:scaleY(1.1);transform-origin:0 11.00px;left:599.7px;-webkit-text-stroke:0;">Umsatz</span>
<span class="t" style="top:284.57px;font-size:13.5px;line-height:13.5px;color:#444444;font-weight:bold;transform:scaleY(1.1);transform-origin:0 11.43px;left:595px;">Datum, kurz</span>
<span class="t" style="top:306.00px;font-size:13px;line-height:13px;color:#6e6e6e;font-weight:normal;transform:scaleY(1.1);transform-origin:0 11.00px;left:595px;-webkit-text-stroke:0;">Umsatz</span>
<span class="t" style="top:333.57px;font-size:13.5px;line-height:13.5px;color:#444444;font-weight:bold;transform:scaleY(1.1);transform-origin:0 11.43px;left:595px;">Datum, lang</span>
<span class="t" style="top:355.00px;font-size:13px;line-height:13px;color:#6e6e6e;font-weight:normal;transform:scaleY(1.1);transform-origin:0 11.00px;left:595px;-webkit-text-stroke:0;">Umsatz</span>
<span class="t" style="top:382.57px;font-size:13.5px;line-height:13.5px;color:#444444;font-weight:bold;transform:scaleY(1.1);transform-origin:0 11.43px;left:595px;">Zeit</span>
<span class="t" style="top:404.00px;font-size:13px;line-height:13px;color:#6e6e6e;font-weight:normal;transform:scaleY(1.1);transform-origin:0 11.00px;left:595px;-webkit-text-stroke:0;">Umsatz</span>
<span class="t" style="top:431.57px;font-size:13.5px;line-height:13.5px;color:#444444;font-weight:bold;transform:scaleY(1.1);transform-origin:0 11.43px;left:595px;">Prozent</span>
<span class="t" style="top:453.00px;font-size:13px;line-height:13px;color:#6e6e6e;font-weight:normal;transform:scaleY(1.1);transform-origin:0 11.00px;left:595px;-webkit-text-stroke:0;">Umsatz</span>
<span class="t" style="top:480.57px;font-size:13.5px;line-height:13.5px;color:#444444;font-weight:bold;transform:scaleY(1.1);transform-origin:0 11.43px;left:595px;">Bruch</span>
<span class="t" style="top:502.00px;font-size:13px;line-height:13px;color:#6e6e6e;font-weight:normal;transform:scaleY(1.1);transform-origin:0 11.00px;left:595px;-webkit-text-stroke:0;">Umsatz</span>
<span class="t" style="top:531.50px;font-size:13px;line-height:13px;color:#555;font-weight:normal;transform:scaleY(1.1);transform-origin:0 11.00px;left:572.5px;">Weitere Zahlenfor<u>m</u>ate...</span>
<span class="t" style="top:532.61px;font-size:14.4px;line-height:14.4px;color:#000000;font-weight:normal;left:768px;">ll</span>
<div style="left:765px;top:534px;width:1.2000000000000455px;height:11px;background:#444;"></div>
<svg style="left:543px;top:87px;" width="38" height="36" viewBox="0 0 38 36"><circle cx="14" cy="13.6" r="11.5" fill="none" stroke="#6f97c4" stroke-width="1"/><path d="M14.2 6.5V15.5H19.5" fill="none" stroke="#555" stroke-width="1.1"/><text x="21" y="33.2" text-anchor="middle" font-family="Liberation Sans" font-size="18" fill="#5a5a5a" stroke="#fff" stroke-width="2" paint-order="stroke" textLength="26" lengthAdjust="spacingAndGlyphs">123</text></svg>
<svg style="left:540px;top:138px;" width="42" height="32" viewBox="0 0 42 32"><text x="21" y="27" text-anchor="middle" font-family="Liberation Sans" font-size="29" fill="#5e5e5e" stroke="#5e5e5e" stroke-width="0.15" textLength="32" lengthAdjust="spacingAndGlyphs">12</text></svg>
<svg style="left:544px;top:185px;" width="36" height="36" viewBox="0 0 36 36"><rect x="3" y="3.3" width="29.5" height="16" fill="#fff" stroke="#3f73b3" stroke-width="2.2"/><path d="M2 2.3H7.5A5.5 5.5 0 0 1 2 7.8Z M33.5 2.3H28A5.5 5.5 0 0 0 33.5 7.8Z M2 20.3H7.5A5.5 5.5 0 0 0 2 14.8Z" fill="#3f73b3"/><circle cx="17.4" cy="11.4" r="4.6" fill="#3f73b3"/><g fill="#eac083" stroke="#fff" stroke-width="0.9"><ellipse cx="27" cy="26.5" rx="6" ry="2.3"/><ellipse cx="27" cy="23.5" rx="6" ry="2.3"/><ellipse cx="27" cy="20.5" rx="6" ry="2.3"/><ellipse cx="27" cy="17.5" rx="6" ry="2.3"/><ellipse cx="18.6" cy="31" rx="6.3" ry="2.3"/><ellipse cx="18.6" cy="28" rx="6.3" ry="2.3"/><ellipse cx="18.6" cy="25" rx="6.3" ry="2.3"/></g></svg>
<svg style="left:542px;top:235px;" width="40" height="38" viewBox="0 0 40 38"><rect x="8.5" y="1.5" width="20" height="30" rx="1.5" fill="#fff" stroke="#8a8a8a" stroke-width="1"/><rect x="10.5" y="4" width="16.5" height="3" fill="#3f73b3"/><rect x="10.5" y="9.0" width="3.3" height="2.6" fill="#8a8a8a"/><rect x="14.8" y="9.0" width="3.3" height="2.6" fill="#8a8a8a"/><rect x="19.1" y="9.0" width="3.3" height="2.6" fill="#8a8a8a"/><rect x="23.4" y="9.0" width="3.3" height="2.6" fill="#8a8a8a"/><rect x="10.5" y="13.0" width="3.3" height="2.6" fill="#8a8a8a"/><rect x="14.8" y="13.0" width="3.3" height="2.6" fill="#8a8a8a"/><rect x="19.1" y="13.0" width="3.3" height="2.6" fill="#8a8a8a"/><rect x="23.4" y="13.0" width="3.3" height="2.6" fill="#8a8a8a"/><rect x="10.5" y="17.0" width="3.3" height="2.6" fill="#8a8a8a"/><rect x="14.8" y="17.0" width="3.3" height="2.6" fill="#8a8a8a"/><rect x="19.1" y="17.0" width="3.3" height="2.6" fill="#8a8a8a"/><rect x="23.4" y="17.0" width="3.3" height="2.6" fill="#8a8a8a"/><rect x="10.5" y="21.0" width="3.3" height="2.6" fill="#8a8a8a"/><rect x="14.8" y="21.0" width="3.3" height="2.6" fill="#8a8a8a"/><rect x="19.1" y="21.0" width="3.3" height="2.6" fill="#8a8a8a"/><rect x="23.4" y="21.0" width="3.3" height="2.6" fill="#8a8a8a"/><rect x="10.5" y="26" width="8" height="2.5" fill="#777"/><g fill="#eac083" stroke="#fff" stroke-width="0.9"><ellipse cx="33" cy="28.5" rx="5.2" ry="2.1"/><ellipse cx="33" cy="25.8" rx="5.2" ry="2.1"/><ellipse cx="33" cy="23" rx="5.2" ry="2.1"/><ellipse cx="26" cy="33" rx="5.4" ry="2.1"/><ellipse cx="26" cy="30.3" rx="5.4" ry="2.1"/><ellipse cx="26" cy="27.6" rx="5.4" ry="2.1"/></g></svg>
<svg style="left:545px;top:285px;" width="34" height="32" viewBox="0 0 34 32"><rect x="0.5" y="0.5" width="32" height="4" fill="#808080"/><path d="M0.50 4.5V30.5" stroke="#bdbdbd" stroke-width="1"/><path d="M5.83 4.5V30.5" stroke="#bdbdbd" stroke-width="1"/><path d="M11.17 4.5V30.5" stroke="#bdbdbd" stroke-width="1"/><path d="M16.50 4.5V30.5" stroke="#bdbdbd" stroke-width="1"/><path d="M21.83 4.5V30.5" stroke="#bdbdbd" stroke-width="1"/><path d="M27.17 4.5V30.5" stroke="#bdbdbd" stroke-width="1"/><path d="M32.50 4.5V30.5" stroke="#bdbdbd" stroke-width="1"/><path d="M0.5 4.50H32.5" stroke="#bdbdbd" stroke-width="1"/><path d="M0.5 9.70H32.5" stroke="#bdbdbd" stroke-width="1"/><path d="M0.5 14.90H32.5" stroke="#bdbdbd" stroke-width="1"/><path d="M0.5 20.10H32.5" stroke="#bdbdbd" stroke-width="1"/><path d="M0.5 25.30H32.5" stroke="#bdbdbd" stroke-width="1"/><path d="M0.5 30.50H32.5" stroke="#bdbdbd" stroke-width="1"/><rect x="21.3" y="9.7" width="5.3" height="5.2" fill="#3f78c0"/></svg>
<svg style="left:545px;top:334px;" width="34" height="32" viewBox="0 0 34 32"><rect x="0.5" y="0.5" width="32" height="4" fill="#808080"/><path d="M0.50 4.5V30.5" stroke="#bdbdbd" stroke-width="1"/><path d="M5.83 4.5V30.5" stroke="#bdbdbd" stroke-width="1"/><path d="M11.17 4.5V30.5" stroke="#bdbdbd" stroke-width="1"/><path d="M16.50 4.5V30.5" stroke="#bdbdbd" stroke-width="1"/><path d="M21.83 4.5V30.5" stroke="#bdbdbd" stroke-width="1"/><path d="M27.17 4.5V30.5" stroke="#bdbdbd" stroke-width="1"/><path d="M32.50 4.5V30.5" stroke="#bdbdbd" stroke-width="1"/><path d="M0.5 4.50H32.5" stroke="#bdbdbd" stroke-width="1"/><path d="M0.5 9.70H32.5" stroke="#bdbdbd" stroke-width="1"/><path d="M0.5 14.90H32.5" stroke="#bdbdbd" stroke-width="1"/><path d="M0.5 20.10H32.5" stroke="#bdbdbd" stroke-width="1"/><path d="M0.5 25.30H32.5" stroke="#bdbdbd" stroke-width="1"/><path d="M0.5 30.50H32.5" stroke="#bdbdbd" stroke-width="1"/><rect x="21.3" y="9.7" width="5.3" height="5.2" fill="#3f78c0"/></svg>
<svg style="left:544px;top:381px;" width="36" height="36" viewBox="0 0 36 36"><circle cx="18" cy="18" r="15.3" fill="none" stroke="#4f7db5" stroke-width="1.2"/><path d="M17 8.5V19H25" fill="none" stroke="#595959" stroke-width="1.2"/></svg>
<svg style="left:545px;top:432px;" width="34" height="32" viewBox="0 0 34 32"><text x="16.5" y="27" text-anchor="middle" font-family="Liberation Sans" font-size="28" fill="#595959" textLength="22" lengthAdjust="spacingAndGlyphs">%</text></svg>
<svg style="left:545px;top:482px;" width="34" height="32" viewBox="0 0 34 32"><path d="M4.6 6.6L8.8 3.9V16.4M4.6 16.4H12.4" fill="none" stroke="#595959" stroke-width="1.5"/><path d="M9.3 28.2L25.9 3.8" stroke="#595959" stroke-width="1.6"/><text x="0" y="0" transform="translate(18.6,28) scale(1.22,1)" font-family="Liberation Sans" font-size="16" fill="#595959">2</text></svg>
</body></html>
